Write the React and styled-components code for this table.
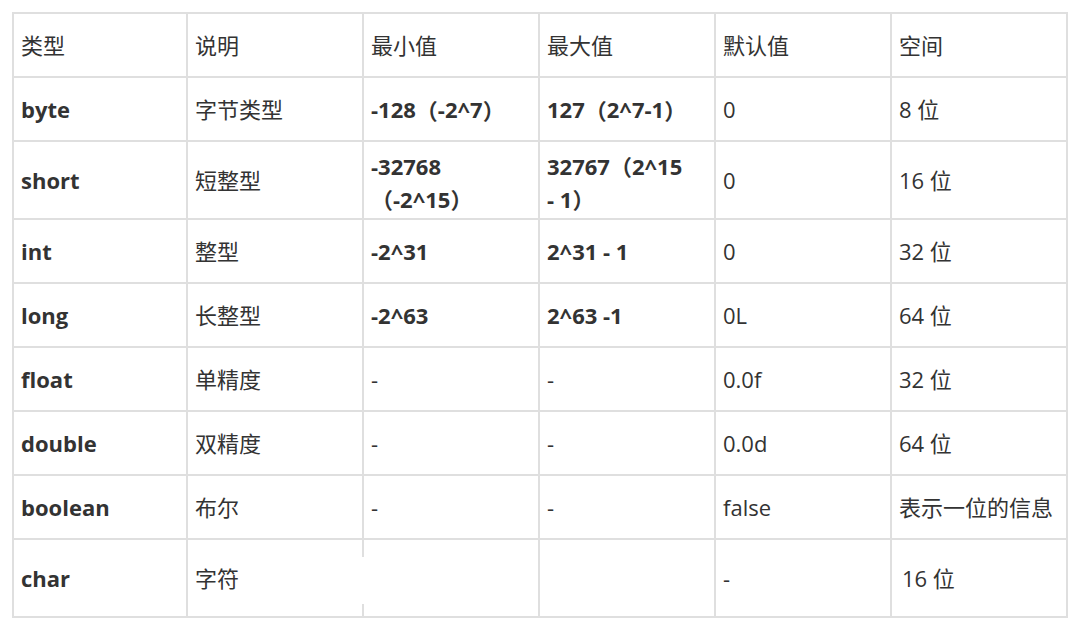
import React from 'react';
import styled, { createGlobalStyle } from 'styled-components';

const rows = [
  { type: 'byte', desc: '字节类型', min: '-128（-2^7）', max: '127（2^7-1）', def: '0', size: '8 位' },
  {
    type: 'short',
    desc: '短整型',
    min: ['-32768', '（-2^15）'],
    max: ['32767（2^15', '- 1）'],
    def: '0',
    size: '16 位',
    tall: true,
  },
  { type: 'int', desc: '整型', min: '-2^31', max: '2^31 - 1', def: '0', size: '32 位' },
  { type: 'long', desc: '长整型', min: '-2^63', max: '2^63 -1', def: '0L', size: '64 位' },
  { type: 'float', desc: '单精度', min: '-', max: '-', def: '0.0f', size: '32 位' },
  { type: 'double', desc: '双精度', min: '-', max: '-', def: '0.0d', size: '64 位' },
  { type: 'boolean', desc: '布尔', min: '-', max: '-', def: 'false', size: '表示一位的信息' },
  { type: 'char', desc: '字符', min: '', max: '', def: '-', size: '16 位', tall: true, last: true },
];

// full-width brackets get a font that keeps their half-em spacing
const withParens = (line) =>
  line.split(/([（）])/).map((part, i) =>
    part === '（' || part === '）' ? <Paren key={i}>{part}</Paren> : part
  );

// wrapped values come as an array of lines
const Value = ({ text }) =>
  Array.isArray(text) ? (
    <Lines>
      {text.map((line) => (
        <span key={line}>{withParens(line)}</span>
      ))}
    </Lines>
  ) : (
    withParens(text)
  );

const App = () => {
  return (
    <>
      <GlobalStyle />
      <Table>
        {['类型', '说明', '最小值', '最大值', '默认值', '空间'].map((h) => (
          <Cell key={h}>{h}</Cell>
        ))}
        {rows.map((r) => (
          <React.Fragment key={r.type}>
            <Cell $tall={r.tall} $bold>{r.type}</Cell>
            <Cell $tall={r.tall} $cut={r.last}>{r.desc}</Cell>
            <Cell $tall={r.tall} $bold={r.min !== '-'}>
              <Value text={r.min} />
            </Cell>
            <Cell $tall={r.tall} $bold={r.max !== '-'}>
              <Value text={r.max} />
            </Cell>
            <Cell $tall={r.tall}>{r.def}</Cell>
            <Cell $tall={r.tall} $indent={r.last}>{r.size}</Cell>
          </React.Fragment>
        ))}
      </Table>
    </>
  );
};

export default App;

const GlobalStyle = createGlobalStyle`
  body {
    margin: 0;
    background: #fff;
    font-family: "Open Sans", "Noto Sans CJK SC", sans-serif;
    color: #333;
  }
`;

const Table = styled.div`
  display: grid;
  grid-template-columns: 174px repeat(5, 176px);
  width: fit-content;
  margin: 12px 0 0 12px;
  border-top: 2px solid #dfdfdf;
  border-left: 2px solid #dfdfdf;
`;

const Cell = styled.div`
  position: relative;
  box-sizing: border-box;
  display: flex;
  align-items: center;
  height: ${(p) => (p.$tall ? '78px' : '64px')};
  padding: 0 6px 0 ${(p) => (p.$indent ? '10px' : '7px')};
  border-right: 2px solid #dfdfdf;
  border-bottom: 2px solid #dfdfdf;
  font-size: 22px;
  line-height: 32px;
  font-weight: ${(p) => (p.$bold ? 700 : 400)};
  white-space: nowrap;
  text-spacing-trim: space-all;

  ${(p) =>
    p.$cut &&
    `
    &::after {
      content: '';
      position: absolute;
      right: -2px;
      top: 17px;
      width: 2px;
      height: 47px;
      background: #fff;
    }
  `}
`;

const Paren = styled.span`
  font-family: "Noto Sans CJK JP", "Noto Sans CJK SC", sans-serif;
  text-spacing-trim: space-all;
`;

const Lines = styled.div`
  display: flex;
  flex-direction: column;
  margin-top: 4px;
`;
